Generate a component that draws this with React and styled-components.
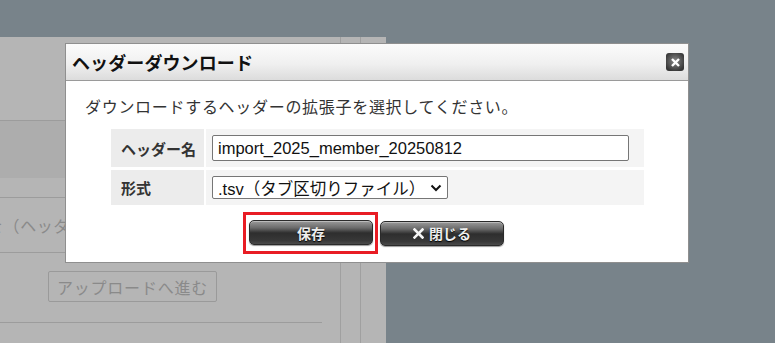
import React from "react"
import styled, { createGlobalStyle } from "styled-components"

const GlobalStyle = createGlobalStyle`
  html, body {
    margin: 0;
    padding: 0;
    background: #78838a;
    font-family: "Liberation Sans", "Noto Sans CJK JP", sans-serif;
  }
`

const Screen = styled.div`
  position: relative;
  width: 775px;
  height: 343px;
  overflow: hidden;
  background: #78838a;
  display: flex;
  flex-direction: column;
`

const TopBand = styled.div`
  height: 37px;
  flex: none;
`

const Backdrop = styled.div`
  flex: 1;
  display: flex;
`

const Page = styled.div`
  width: 386px;
  background: #b5b5b5;
  display: flex;
`

const MainCol = styled.div`
  width: 340px;
  flex: none;
  border-right: 1px solid #a0a0a0;
  display: flex;
  flex-direction: column;
`

const SideCol = styled.div`
  width: ${(p) => p.w}px;
  flex: none;
  border-right: ${(p) => (p.line ? "1px solid #a0a0a0" : "none")};
`

const PageRow = styled.div`
  height: ${(p) => p.h}px;
  flex: none;
  background: ${(p) => (p.dark ? "#adadad" : "transparent")};
  border-bottom: ${(p) => (p.line ? "1px solid #9c9c9c" : "none")};
  display: flex;
  align-items: center;
  overflow: hidden;
`

const DimText = styled.span`
  margin-left: -13px;
  white-space: nowrap;
  font-size: 16px;
  letter-spacing: 0.6px;
  color: #8a8a8a;
  font-family: "Noto Sans CJK JP", sans-serif;
`

const DimButton = styled.div`
  margin: 18px 0 0 48px;
  width: 167px;
  height: 29px;
  border: 1px solid #9a9a9a;
  border-radius: 2px;
  display: flex;
  align-items: center;
  justify-content: center;
  font-size: 16px;
  letter-spacing: 0.8px;
  color: #8a8a8a;
  font-family: "Noto Sans CJK JP", sans-serif;
`

const ButtonRow = styled.div`
  height: 69px;
  flex: none;
  display: flex;
  align-items: flex-start;
`

const Rule = styled.div`
  width: 322px;
  height: 1px;
  background: #9c9c9c;
`

const Dialog = styled.div`
  position: absolute;
  left: 65px;
  top: 43px;
  width: 622px;
  height: 218px;
  background: #fff;
  border: 1px solid #8f8f8f;
  display: flex;
  flex-direction: column;
`

const TitleBar = styled.div`
  height: 36px;
  flex: none;
  background: linear-gradient(#fbfbfb, #f0f0f0 55%, #dcdcdc);
  border-bottom: 1px solid #9a9a9a;
  display: flex;
  align-items: center;
  justify-content: space-between;
  padding: 0 4px 0 6px;
`

const Title = styled.h2`
  margin: 0;
  font-size: 18px;
  font-weight: bold;
  color: #111;
  font-family: "Noto Sans CJK JP", sans-serif;
  letter-spacing: 0.1px;
`

const CloseBox = styled.div`
  width: 18px;
  height: 18px;
  border-radius: 3px;
  background: radial-gradient(circle at 50% 45%, #8a8a8a, #3a3a3a 75%, #2b2b2b);
  display: flex;
  align-items: center;
  justify-content: center;
`

const Body = styled.div`
  flex: 1;
  display: flex;
  flex-direction: column;
  padding: 13px 0 0 0;
`

const Lead = styled.p`
  margin: 0 0 0 19px;
  font-size: 16px;
  letter-spacing: 0.7px;
  color: #333;
  font-family: "Noto Sans CJK JP", sans-serif;
  line-height: 24px;
`

const Table = styled.div`
  margin: 11px 0 0 45px;
  width: 533px;
  display: grid;
  grid-template-columns: 93px 1fr;
  grid-template-rows: 38px 35px;
  gap: 3px 2px;
`

const Label = styled.div`
  background: #ececec;
  display: flex;
  align-items: center;
  padding-left: 10px;
  font-size: 15px;
  font-weight: bold;
  color: #333;
  font-family: "Noto Sans CJK JP", sans-serif;
`

const Cell = styled.div`
  background: #f4f4f4;
  display: flex;
  align-items: center;
  padding-left: 6px;
`

const TextInput = styled.div`
  width: 410px;
  height: 24px;
  border: 1px solid #767676;
  border-radius: 2px;
  background: #fff;
  display: flex;
  align-items: center;
  padding-left: 5px;
  font-size: 16.5px;
  color: #111;
`

const Select = styled.div`
  width: 236px;
  height: 23px;
  border: 1px solid #767676;
  border-radius: 2px;
  background: #fff;
  display: flex;
  align-items: center;
  justify-content: space-between;
  padding: 0 5px 0 5px;
  box-sizing: border-box;
  font-size: 16.5px;
  color: #111;
  white-space: nowrap;
`

const Actions = styled.div`
  display: flex;
  gap: 2px;
  margin: 7px 0 0 177px;
  align-items: center;
`

const Highlight = styled.div`
  border: 3px solid #e81c24;
  padding: 5px 2px 6px 3px;
  display: flex;
`

const DarkButton = styled.div`
  width: 124px;
  height: 25px;
  box-sizing: border-box;
  border-radius: 5px;
  border: 1px solid #2a2a2a;
  background: linear-gradient(#9a9a9a 0%, #6a6a6a 30%, #2e2e2e 52%, #383838 85%, #4a4a4a 100%);
  box-shadow: inset 0 1px 0 rgba(255, 255, 255, 0.35), 0 1px 1px rgba(0, 0, 0, 0.4);
  display: flex;
  align-items: center;
  justify-content: center;
  gap: 5px;
  font-size: 14px;
  font-weight: bold;
  color: #eeeeee;
  font-family: "Noto Sans CJK JP", sans-serif;
  text-shadow: 0 1px 1px #000;
`

const Cross = () => (
  <svg width="11" height="11" viewBox="0 0 11 11">
    <path d="M1.5 1.5 L9.5 9.5 M9.5 1.5 L1.5 9.5" stroke="#f4f4f4" strokeWidth="2.6" strokeLinecap="square" />
  </svg>
)

const Chevron = () => (
  <svg width="12" height="8" viewBox="0 0 12 8">
    <path d="M1.5 1.5 L6 6 L10.5 1.5" stroke="#111" strokeWidth="2" fill="none" />
  </svg>
)

export default function App() {
  return (
    <>
      <GlobalStyle />
      <Screen>
        <TopBand />
        <Backdrop>
          <Page>
            <MainCol>
              <PageRow h={83} line />
              <PageRow h={57} dark />
              <PageRow h={19} line />
              <PageRow h={54} line>
                <DimText>を（ヘッダー名）</DimText>
              </PageRow>
              <ButtonRow>
                <DimButton>アップロードへ進む</DimButton>
              </ButtonRow>
              <Rule />
            </MainCol>
            <SideCol w={19} line />
            <SideCol w={25} />
          </Page>
        </Backdrop>

        <Dialog>
          <TitleBar>
            <Title>ヘッダーダウンロード</Title>
            <CloseBox>
              <svg width="11" height="11" viewBox="0 0 11 11">
                <path d="M2 2 L9 9 M9 2 L2 9" stroke="#fff" strokeWidth="2.4" />
              </svg>
            </CloseBox>
          </TitleBar>
          <Body>
            <Lead>ダウンロードするヘッダーの拡張子を選択してください。</Lead>
            <Table>
              <Label>ヘッダー名</Label>
              <Cell>
                <TextInput>import_2025_member_20250812</TextInput>
              </Cell>
              <Label>形式</Label>
              <Cell>
                <Select>
                  <span>.tsv（タブ区切りファイル）</span>
                  <Chevron />
                </Select>
              </Cell>
            </Table>
            <Actions>
              <Highlight>
                <DarkButton>保存</DarkButton>
              </Highlight>
              <DarkButton>
                <Cross />
                閉じる
              </DarkButton>
            </Actions>
          </Body>
        </Dialog>
      </Screen>
    </>
  )
}
